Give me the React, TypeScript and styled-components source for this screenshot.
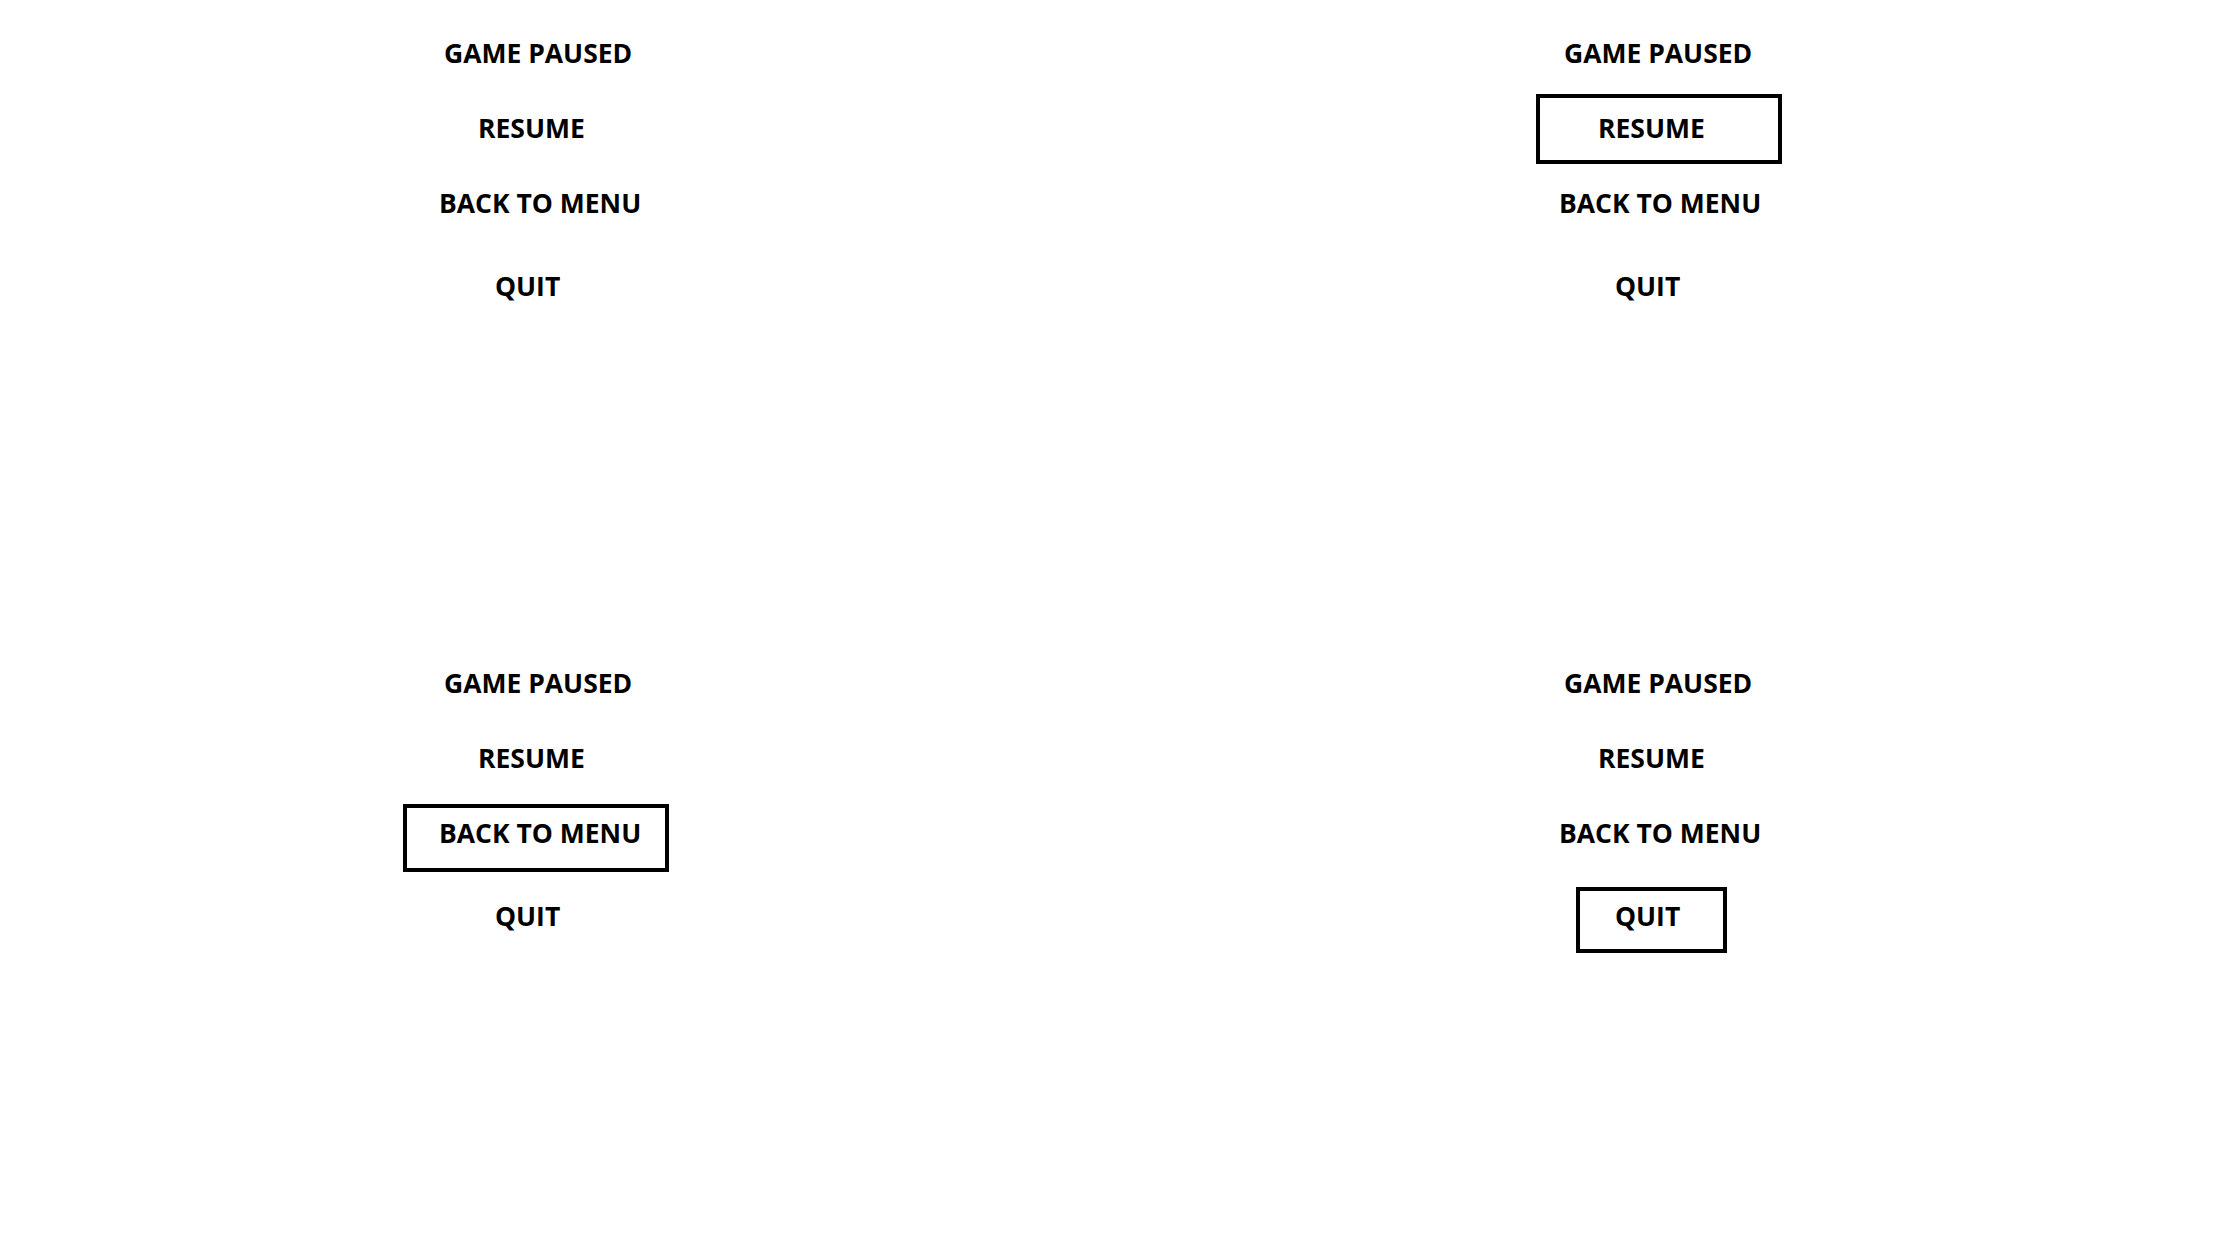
import styled, { createGlobalStyle } from 'styled-components';

const GlobalStyle = createGlobalStyle`
  html, body {
    margin: 0;
    padding: 0;
    background: #ffffff;
  }
`;

type Option = {
  label: string;
  left: number;
  width: number;
  height: number;
  gap: number;
  indent: number;
  lift: number;
};

// boxes are sized to match the hand-made button rects from the mockup
const OPTIONS: Option[] = [
  { label: 'RESUME', left: 416, width: 246, height: 70, gap: 23, indent: 58, lift: 2 },
  { label: 'BACK TO MENU', left: 403, width: 266, height: 68, gap: 10, indent: 32, lift: 10 },
  { label: 'QUIT', left: 456, width: 151, height: 66, gap: 15, indent: 35, lift: 8 },
];

function PauseMenu({ selected }: { selected: number }) {
  return (
    <Menu>
      <Title>GAME PAUSED</Title>
      {OPTIONS.map((opt, i) => (
        <Item
          key={opt.label}
          $left={opt.left}
          $width={opt.width}
          $height={opt.height}
          $gap={opt.gap}
          $indent={opt.indent}
          $lift={opt.lift}
          $active={i === selected}
        >
          {opt.label}
        </Item>
      ))}
    </Menu>
  );
}

function App() {
  return (
    <>
      <GlobalStyle />
      <Page>
        <PauseMenu selected={-1} />
        <PauseMenu selected={0} />
        <PauseMenu selected={1} />
        <PauseMenu selected={2} />
      </Page>
    </>
  );
}

const Page = styled.div`
  width: 2240px;
  height: 1260px;
  display: grid;
  grid-template-columns: 1120px 1120px;
  grid-template-rows: 630px 630px;
  font-family: 'Open Sans', 'Liberation Sans', sans-serif;
  font-weight: 700;
  font-size: 26.5px;
  color: #000;
`;

const Menu = styled.div`
  display: flex;
  flex-direction: column;
  align-items: flex-start;
  padding-top: 35px;
`;

const Title = styled.div`
  margin-left: 444px;
  line-height: 36px;
  height: 36px;
  white-space: nowrap;
`;

const Item = styled.div<{
  $left: number;
  $width: number;
  $height: number;
  $gap: number;
  $indent: number;
  $lift: number;
  $active: boolean;
}>`
  box-sizing: border-box;
  display: flex;
  align-items: center;
  margin-left: ${({ $left }) => $left}px;
  margin-top: ${({ $gap }) => $gap}px;
  width: ${({ $width }) => $width}px;
  height: ${({ $height }) => $height}px;
  padding-left: ${({ $indent }) => $indent}px;
  padding-bottom: ${({ $lift }) => $lift}px;
  border: 4px solid ${({ $active }) => ($active ? '#000' : 'transparent')};
  line-height: 36px;
  white-space: nowrap;
`;

export default App;
